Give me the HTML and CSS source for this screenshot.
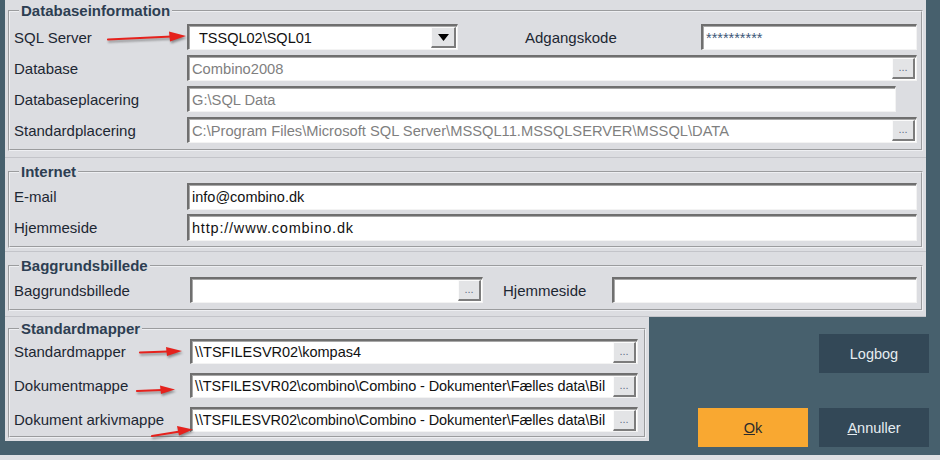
FILE: index.html
```html
<!DOCTYPE html>
<html lang="da">
<head>
    <meta charset="UTF-8">
    <title>Indstillinger</title>
    <link rel="stylesheet" href="styles.css">
</head>
<body>
    <div class="screen">
        <div class="panel">
            <div class="section sec-db">
                <fieldset class="group">
                    <legend>Databaseinformation</legend>
                    <div class="row row-server">
                        <label>SQL Server</label>
                        <div class="field combo">
                            <span class="value">TSSQL02\SQL01</span>
                            <span class="drop"><svg width="11" height="7" viewBox="0 0 11 7"><path d="M0 0h11L5.5 7z" fill="#000"/></svg></span>
                        </div>
                        <label class="mid">Adgangskode</label>
                        <div class="field password"><span class="value">**********</span></div>
                    </div>
                    <div class="row">
                        <label>Database</label>
                        <div class="field disabled"><span class="value">Combino2008</span><span class="dots">...</span></div>
                    </div>
                    <div class="row">
                        <label>Databaseplacering</label>
                        <div class="field disabled short"><span class="value">G:\SQL Data</span></div>
                    </div>
                    <div class="row">
                        <label>Standardplacering</label>
                        <div class="field disabled"><span class="value">C:\Program Files\Microsoft SQL Server\MSSQL11.MSSQLSERVER\MSSQL\DATA</span><span class="dots">...</span></div>
                    </div>
                </fieldset>
            </div>

            <div class="section sec-net">
                <fieldset class="group">
                    <legend>Internet</legend>
                    <div class="row">
                        <label>E-mail</label>
                        <div class="field tall"><span class="value">info@combino.dk</span></div>
                    </div>
                    <div class="row">
                        <label>Hjemmeside</label>
                        <div class="field tall"><span class="value wide">http://www.combino.dk</span></div>
                    </div>
                </fieldset>
            </div>

            <div class="section sec-bg">
                <fieldset class="group">
                    <legend>Baggrundsbillede</legend>
                    <div class="row row-bg">
                        <label>Baggrundsbillede</label>
                        <div class="field"><span class="value"></span><span class="dots">...</span></div>
                        <label class="mid">Hjemmeside</label>
                        <div class="field"><span class="value"></span></div>
                    </div>
                </fieldset>
            </div>
        </div>

        <div class="lower">
            <div class="section sec-folders">
                <fieldset class="group">
                    <legend>Standardmapper</legend>
                    <div class="row row-folder">
                        <label>Standardmapper</label>
                        <div class="field"><span class="value">\\TSFILESVR02\kompas4</span><span class="dots">...</span></div>
                    </div>
                    <div class="row row-folder">
                        <label>Dokumentmappe</label>
                        <div class="field"><span class="value path">\\TSFILESVR02\combino\Combino - Dokumenter\Fælles data\Bil</span><span class="dots">...</span></div>
                    </div>
                    <div class="row row-folder">
                        <label>Dokument arkivmappe</label>
                        <div class="field"><span class="value path">\\TSFILESVR02\combino\Combino - Dokumenter\Fælles data\Bil</span><span class="dots">...</span></div>
                    </div>
                </fieldset>
            </div>

            <div class="actions">
                <button class="btn btn-dark">Logbog</button>
                <div class="btn-row">
                    <button class="btn btn-ok"><u>O</u>k</button>
                    <button class="btn btn-dark"><u>A</u>nnuller</button>
                </div>
            </div>
        </div>

        <!-- red annotation arrows on top of the screenshot -->
        <svg class="arrows" width="940" height="460" viewBox="0 0 940 460">
            <g stroke="#e5221d" stroke-width="2.2" fill="none" stroke-linecap="round">
                <path d="M108 39.5L172 36.5"/>
                <path d="M140 352.5L168 351.5"/>
                <path d="M137 391L162 390"/>
                <path d="M152 436L180 431.5"/>
            </g>
            <g fill="#e5221d">
                <path d="M169 31.5L186 36L170 41.5z"/>
                <path d="M166 347L182 351L167 356z"/>
                <path d="M160 385.5L175 389.5L161 394z"/>
                <path d="M177 426L193 429.5L179 435.5z"/>
            </g>
        </svg>
    </div>
</body>
</html>
```

FILE: styles.css
```css
body {
    margin: 0;
    width: 940px;
    height: 460px;
    overflow: hidden;
    background: #47606d;
    font-family: "Liberation Sans", Arial, sans-serif;
    font-size: 15px;
    color: #1c2733;
}
.screen {
    position: relative;
    height: 455px;
    border-bottom: 5px solid #dfe0e3;
    padding-left: 5px;
}
.panel {
    width: 921px;
    background: #dcdde1;
}
.section {
    background: #dcdde1;
    border-bottom: 1px solid #c3c4c9;
    box-sizing: border-box;
}
.group {
    margin: 0 3px;
    border: 2px groove #eeeff2;
    padding: 0 4px 6px 4px;
    min-width: 0;
}
.group legend {
    font-size: 15px;
    font-weight: bold;
    line-height: 16px;
    color: #2d3e52;
    margin-left: 5px;
    padding: 0 2px;
}
.sec-db {
    height: 158px;
    padding-top: 3px;
}
.sec-db .group {
    padding-top: 5px;
}
.sec-net {
    height: 94px;
    padding-top: 6px;
}
.sec-net .group {
    padding-top: 3px;
}
.sec-bg {
    height: 65px;
    padding-top: 6px;
}
.sec-bg .group {
    padding-top: 3px;
}
.row {
    display: grid;
    grid-template-columns: 173px 1fr;
    align-items: center;
    height: 26px;
    margin-bottom: 5px;
}
.row:last-child {
    margin-bottom: 0;
}
.row label {
    white-space: nowrap;
}
.row-server {
    grid-template-columns: 173px 271px 1fr 216px;
}
.row-bg {
    grid-template-columns: 176px 293px 129px 1fr;
}
.row .mid {
    padding-left: 20px;
}
.row-server .mid {
    padding-left: 67px;
}
.field {
    position: relative;
    display: flex;
    align-items: center;
    height: 26px;
    box-sizing: border-box;
    background: #fff;
    border-style: solid;
    border-width: 2px 1px 1px 2px;
    border-color: #6f6f6f #f3f3f3 #f3f3f3 #6f6f6f;
    box-shadow: inset 1px 1px 0 #a8a8a8;
    overflow: hidden;
}
.field.tall {
    height: 27px;
}
.field.short {
    margin-right: 21px;
}
.field .value {
    flex: 1;
    min-width: 0;
    padding-left: 3px;
    font-size: 14.5px;
    color: #111;
    white-space: nowrap;
    overflow: hidden;
}
.field .value.wide {
    letter-spacing: 0.8px;
}
.field .value.path {
    letter-spacing: -0.1px;
}
.field.disabled .value {
    color: #7f7f7f;
    font-size: 14.7px;
}
.field.combo .value {
    padding-left: 10px;
}
.field.password .value {
    color: #3d5878;
}
.dots, .drop {
    flex: none;
    display: flex;
    align-items: center;
    justify-content: center;
    height: 21px;
    margin-right: 1px;
    box-sizing: border-box;
    background: #e3e4e6;
    border-style: solid;
    border-width: 1px 2px 2px 1px;
    border-color: #fbfbfb #7c7c7c #7c7c7c #fbfbfb;
}
.dots {
    width: 23px;
    font-size: 11px;
    color: #5d6f86;
    padding-bottom: 2px;
}
.drop {
    width: 25px;
}
.lower {
    display: flex;
    height: 139px;
}
.sec-folders {
    width: 644px;
    height: 124px;
    padding-top: 4px;
    border-bottom: 0;
}
.sec-folders .group {
    padding: 2px 6px 4px 4px;
}
.row-folder {
    grid-template-columns: 176px 1fr;
    height: 25px;
    margin-bottom: 9px;
}
.row-folder .field {
    height: 25px;
}
.actions {
    flex: 1;
    display: flex;
    flex-direction: column;
    align-items: flex-end;
    padding: 17px 11px 0 0;
}
.btn-row {
    display: flex;
    gap: 11px;
    margin-top: 35px;
}
.btn {
    width: 110px;
    height: 39px;
    border: 0;
    font-family: "Liberation Sans", Arial, sans-serif;
    font-size: 14.5px;
    cursor: pointer;
}
.btn-dark {
    background: #334857;
    color: #e6edf1;
}
.btn-ok {
    background: #f9a831;
    color: #2b2b2b;
}
.arrows {
    position: absolute;
    left: 0;
    top: 0;
    pointer-events: none;
    filter: drop-shadow(1px 2px 1px rgba(40, 40, 40, 0.45));
}
```
